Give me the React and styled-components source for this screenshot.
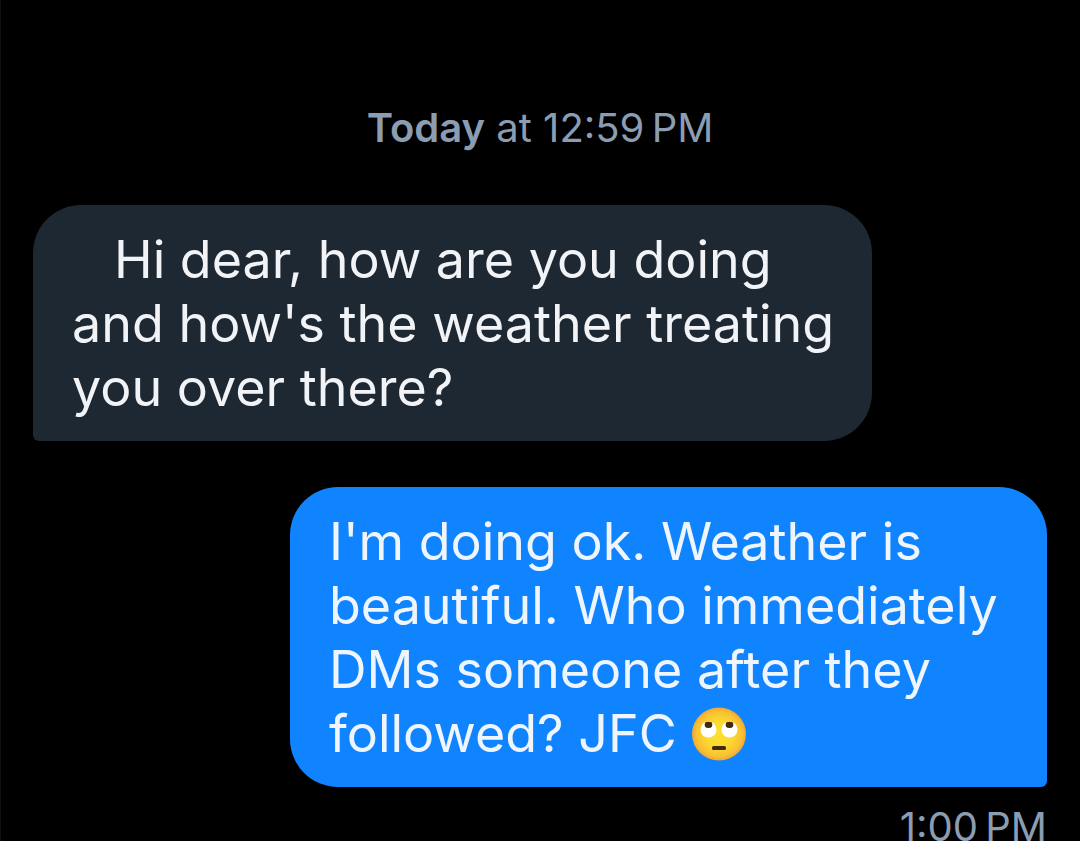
import React from "react";
import styled, { createGlobalStyle } from "styled-components";

const GlobalStyle = createGlobalStyle`
  * { box-sizing: border-box; }
  html { scrollbar-width: none; background: #000; }
  body { margin: 0; font-family: Inter, "Liberation Sans", sans-serif; }
`;

const Conversation = styled.main`
  display: flex;
  flex-direction: column;
  min-height: 100vh;
  padding: 104px 33px 0 32px;
  border-left: 1px solid #0c1216;
`;

const DateLine = styled.h2`
  margin: 0 0 53px;
  color: #8b9db2;
  font-size: 40px;
  line-height: 48px;
  font-weight: 400;
  text-align: center;
`;

const Day = styled.strong`
  font-weight: 600;
`;

const Bubble = styled.p`
  align-self: ${(p) => (p.$sent ? "flex-end" : "flex-start")};
  width: ${(p) => (p.$sent ? "757px" : "839px")};
  max-width: 100%;
  margin: 0 0 ${(p) => (p.$sent ? "16px" : "46px")};
  padding: 23px 32px 21px 39px;
  border-radius: ${(p) => (p.$sent ? "48px 48px 6px 48px" : "48px 48px 48px 6px")};
  background: ${(p) => (p.$sent ? "#1083fe" : "#1e2832")};
  color: ${(p) => (p.$sent ? "#eef5fc" : "#f1f3f6")};
  font-size: 52px;
  line-height: 64px;
  text-indent: ${(p) => (p.$sent ? "0" : "42px")};
`;

const Emoji = styled.svg`
  width: 56px;
  height: 54px;
  vertical-align: -9px;
`;

const Time = styled.time`
  align-self: flex-end;
  color: #8b9db2;
  font-size: 40px;
  line-height: 48px;
`;

function RollingEyes() {
  return (
    <Emoji viewBox="0 0 56 54" role="img" aria-label="Face with rolling eyes">
      <defs>
        <radialGradient id="face" cx="50%" cy="50%" r="50%">
          <stop offset="0" stopColor="#fde030" />
          <stop offset="0.5" stopColor="#fcd92f" />
          <stop offset="0.85" stopColor="#f9c132" />
          <stop offset="1" stopColor="#eda735" />
        </radialGradient>
      </defs>
      <ellipse cx="28" cy="27" rx="27" ry="26.5" fill="url(#face)" />
      <circle cx="17.5" cy="22.5" r="8" fill="#fff" />
      <circle cx="38.5" cy="22.5" r="8" fill="#fff" />
      <path d="M14 15.5Q17.5 14 21 15.5Q22.500 21 17.500 21Q12.500 21 14 15.500Z" fill="#422b0d" />
      <path d="M35 15.5Q38.5 14 42 15.5Q43.500 21 38.500 21Q33.500 21 35 15.500Z" fill="#422b0d" />
      <rect x="21" y="39" width="14" height="4" rx="1.5" fill="#422b0d" />
    </Emoji>
  );
}

export default function App() {
  return (
    <>
      <GlobalStyle />
      <Conversation>
        <DateLine><Day>Today</Day> at 12:59{"\u202f"}PM</DateLine>
        <Bubble>Hi dear, how are you doing and how's the weather treating you over there?</Bubble>
        <Bubble $sent>
          I'm doing ok. Weather is beautiful. Who immediately DMs someone after they followed? JFC{" "}
          <RollingEyes />
        </Bubble>
        <Time dateTime="13:00">1:00{"\u202f"}PM</Time>
      </Conversation>
    </>
  );
}
